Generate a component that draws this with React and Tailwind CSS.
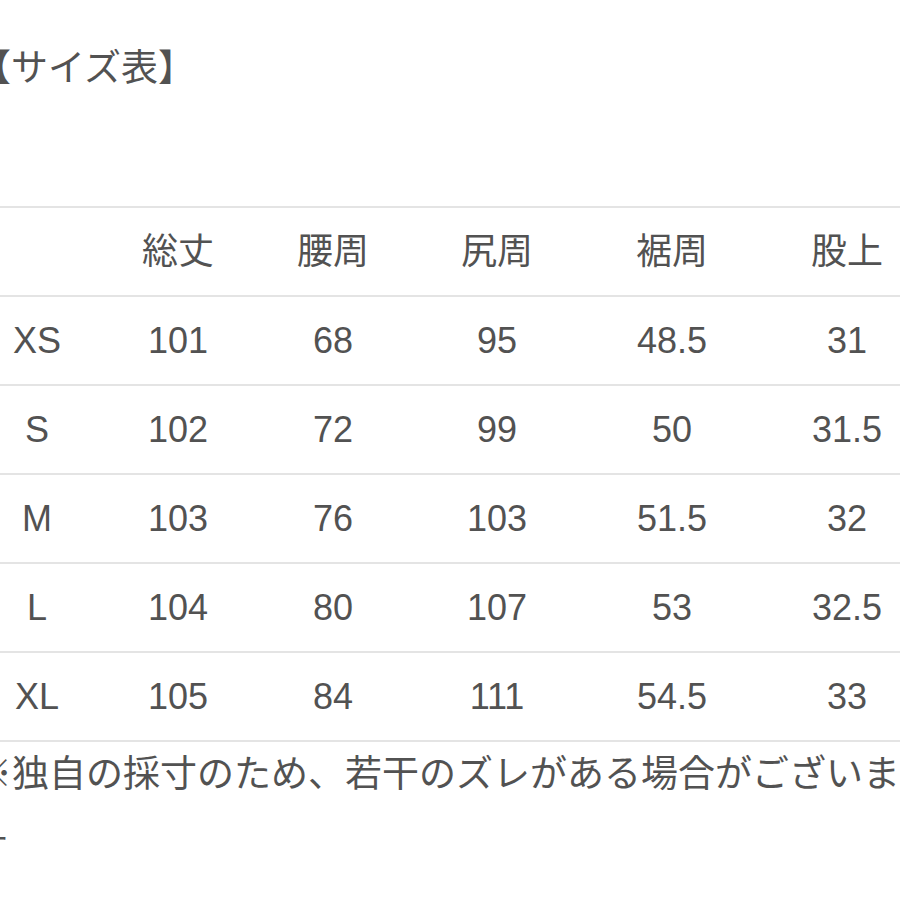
const cols = ["総丈", "腰周", "尻周", "裾周", "股上"];

const rows = [
  ["XS", "101", "68", "95", "48.5", "31"],
  ["S", "102", "72", "99", "50", "31.5"],
  ["M", "103", "76", "103", "51.5", "32"],
  ["L", "104", "80", "107", "53", "32.5"],
  ["XL", "105", "84", "111", "54.5", "33"],
];

const grid = "grid grid-cols-[74px_208px_102px_226px_124px_226px] h-[89px] border-b-2 border-[#e4e4e4] items-center";

const Row = ({ cells }) => (
  <div className={grid}>
    {cells.map((c, i) => (
      <div key={i} className="text-center whitespace-nowrap">
        {c}
      </div>
    ))}
  </div>
);

export default function App() {
  return (
    <div
      className="w-[900px] h-[900px] overflow-hidden bg-white text-[#525252]"
      style={{ fontFamily: '"Liberation Sans", "Noto Sans CJK JP", sans-serif' }}
    >
      <div className="h-[136px] flex items-center -ml-[26px] text-[37px] leading-none whitespace-nowrap">
        【サイズ表】
      </div>
      <div className="mt-[70px] border-t-2 border-[#e4e4e4] text-[36px] w-[958px]">
        <Row cells={["", ...cols]} />
        {rows.map((r) => (
          <Row key={r[0]} cells={r} />
        ))}
      </div>
      <div className="-ml-[25px] w-[960px] text-[37px] leading-[66px] whitespace-nowrap">
        <div>※独自の採寸のため、若干のズレがある場合がございま</div>
        <div className="-ml-[4px] mt-[9px]">す</div>
      </div>
    </div>
  );
}
